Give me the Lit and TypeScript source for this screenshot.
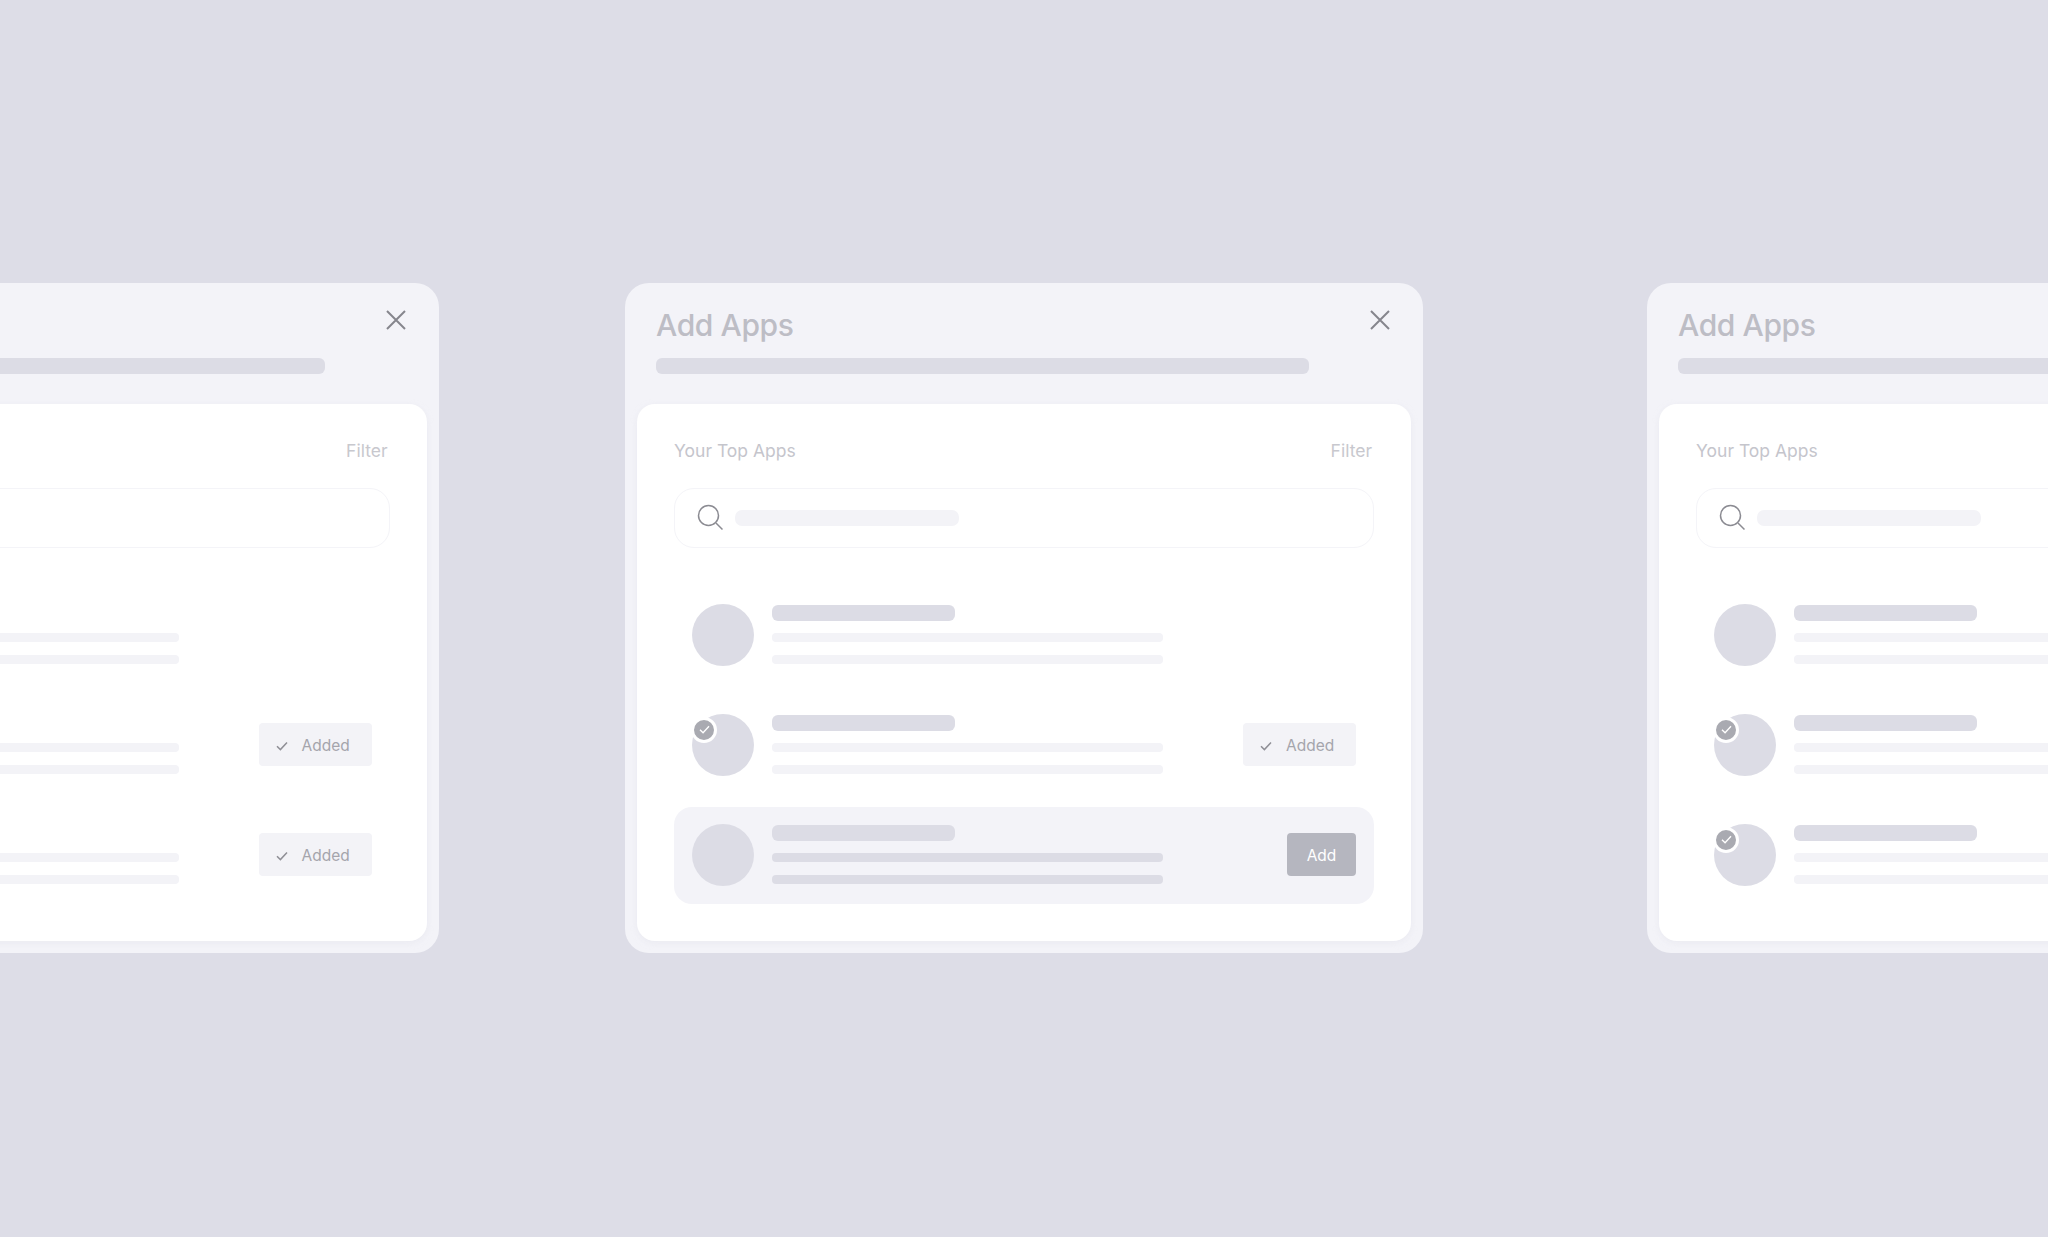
import { LitElement, html, css, svg } from 'lit';
import { customElement } from 'lit/decorators.js';

type AppRow = { badge: boolean; action: 'none' | 'added' | 'add'; active: boolean };

const LEFT_AND_RIGHT: AppRow[] = [
  { badge: false, action: 'none', active: false },
  { badge: true, action: 'added', active: false },
  { badge: true, action: 'added', active: false },
];

const CENTER: AppRow[] = [
  { badge: false, action: 'none', active: false },
  { badge: true, action: 'added', active: false },
  { badge: false, action: 'add', active: true },
];

const checkPath = svg`<path d="M1 5.2 4.4 8.6 11 1.4" fill="none" stroke="currentColor" stroke-width="1.5" />`;

@customElement('app-root')
export class AppRoot extends LitElement {
  static styles = css`
    :host {
      display: block;
      width: 100%;
      height: 100vh;
      overflow: hidden;
      background: #dddde7;
      font-family: 'Inter', 'Noto Sans', sans-serif;
    }

    .track {
      display: flex;
      gap: 186.5px;
      width: max-content;
      margin-left: -359.5px;
      padding-top: 283px;
    }

    .modal {
      box-sizing: border-box;
      width: 798px;
      padding: 0 12px 12px;
      background: #f3f3f8;
      border-radius: 24px;
    }

    .modal:last-child {
      margin-left: 37.5px;
    }

    .header {
      box-sizing: border-box;
      height: 121px;
      padding: 22px 21px 0 19px;
    }

    .title-row {
      display: flex;
      justify-content: space-between;
      height: 40px;
    }

    .title {
      margin: 0;
      font-size: 30px;
      line-height: 40px;
      font-weight: 500;
      letter-spacing: -0.4px;
      color: #bdbdc5;
    }

    .close {
      width: 20px;
      height: 20px;
      margin-top: 5px;
      color: #85858d;
    }

    .subtitle {
      width: 653px;
      height: 16px;
      margin-top: 13px;
      border-radius: 6px;
      background: #dcdce5;
    }

    .panel {
      padding: 35px 37px 37px;
      background: #ffffff;
      border-radius: 18px;
      box-shadow: 0 2px 6px rgba(220, 220, 230, 0.35);
    }

    .panel-head {
      display: flex;
      justify-content: space-between;
      height: 24px;
      font-size: 17.5px;
      line-height: 24px;
      color: #c5c5cc;
    }

    .filter {
      padding-right: 2px;
      color: #c8c8ce;
    }

    .search {
      box-sizing: border-box;
      display: flex;
      align-items: center;
      height: 60px;
      margin-top: 25px;
      padding-left: 22px;
      border: 1.5px solid #f4f4f8;
      border-radius: 20px;
    }

    .search svg {
      width: 28px;
      height: 28px;
      color: #8b8b92;
    }

    .search-bar {
      width: 224px;
      height: 16px;
      margin-left: 10px;
      border-radius: 7px;
      background: #f3f3f7;
    }

    .rows {
      display: flex;
      flex-direction: column;
      gap: 13px;
      margin-top: 39px;
    }

    .row {
      box-sizing: border-box;
      display: flex;
      align-items: center;
      height: 97px;
      padding: 0 18px 2px;
      border-radius: 18px;
    }

    .row.active {
      background: #f3f3f8;
    }

    .avatar {
      position: relative;
      flex: none;
      width: 62px;
      height: 62px;
      border-radius: 50%;
      background: #dcdce5;
    }

    .badge {
      position: absolute;
      left: 0;
      top: 4px;
      box-sizing: content-box;
      display: flex;
      align-items: center;
      justify-content: center;
      width: 20px;
      height: 20px;
      border: 3px solid #ffffff;
      margin: -1px 0 0 -1px;
      border-radius: 50%;
      background: #a9aab1;
      color: #ffffff;
    }

    .badge svg {
      width: 11px;
      height: 9px;
    }

    .lines {
      display: flex;
      flex-direction: column;
      width: 391px;
      margin-left: 18px;
    }

    .line-title {
      width: 183px;
      height: 16px;
      border-radius: 6px;
      background: #dcdce5;
    }

    .line {
      height: 9px;
      margin-top: 13px;
      border-radius: 4px;
      background: #f3f3f7;
    }

    .line-title + .line {
      margin-top: 12px;
    }

    .active .line {
      background: #dcdce5;
    }

    .action {
      box-sizing: border-box;
      display: flex;
      align-items: center;
      height: 43px;
      margin-left: auto;
      padding-top: 2px;
      border-radius: 4px;
      font-size: 15.5px;
    }

    .added {
      width: 113px;
      padding-left: 17px;
      gap: 14px;
      background: #f3f3f7;
      color: #a5a5ac;
    }

    .added svg {
      width: 12px;
      height: 10px;
      color: #8f8f96;
    }

    .add {
      width: 69px;
      justify-content: center;
      background: #b5b6bf;
      color: #ffffff;
    }
  `;

  private renderRow(row: AppRow) {
    return html`
      <div class="row ${row.active ? 'active' : ''}">
        <div class="avatar">
          ${row.badge
            ? html`<div class="badge"><svg viewBox="0 0 12 10">${checkPath}</svg></div>`
            : ''}
        </div>
        <div class="lines">
          <div class="line-title"></div>
          <div class="line"></div>
          <div class="line"></div>
        </div>
        ${row.action === 'added'
          ? html`<div class="action added"><svg viewBox="0 0 12 10">${checkPath}</svg>Added</div>`
          : ''}
        ${row.action === 'add' ? html`<div class="action add">Add</div>` : ''}
      </div>
    `;
  }

  private renderModal(rows: AppRow[]) {
    return html`
      <section class="modal">
        <div class="header">
          <div class="title-row">
            <h2 class="title">Add Apps</h2>
            <svg class="close" viewBox="0 0 20 20">
              <path d="M1 1 19 19M19 1 1 19" fill="none" stroke="currentColor" stroke-width="2" />
            </svg>
          </div>
          <div class="subtitle"></div>
        </div>
        <div class="panel">
          <div class="panel-head">
            <span>Your Top Apps</span>
            <span class="filter">Filter</span>
          </div>
          <div class="search">
            <svg viewBox="0 0 28 28">
              <circle cx="11.5" cy="11.5" r="10" fill="none" stroke="currentColor" stroke-width="1.5" />
              <path d="M19 19 25.5 25.5" fill="none" stroke="currentColor" stroke-width="1.5" />
            </svg>
            <div class="search-bar"></div>
          </div>
          <div class="rows">${rows.map((row) => this.renderRow(row))}</div>
        </div>
      </section>
    `;
  }

  render() {
    return html`
      <div class="track">
        ${this.renderModal(LEFT_AND_RIGHT)}
        ${this.renderModal(CENTER)}
        ${this.renderModal(LEFT_AND_RIGHT)}
      </div>
    `;
  }
}
